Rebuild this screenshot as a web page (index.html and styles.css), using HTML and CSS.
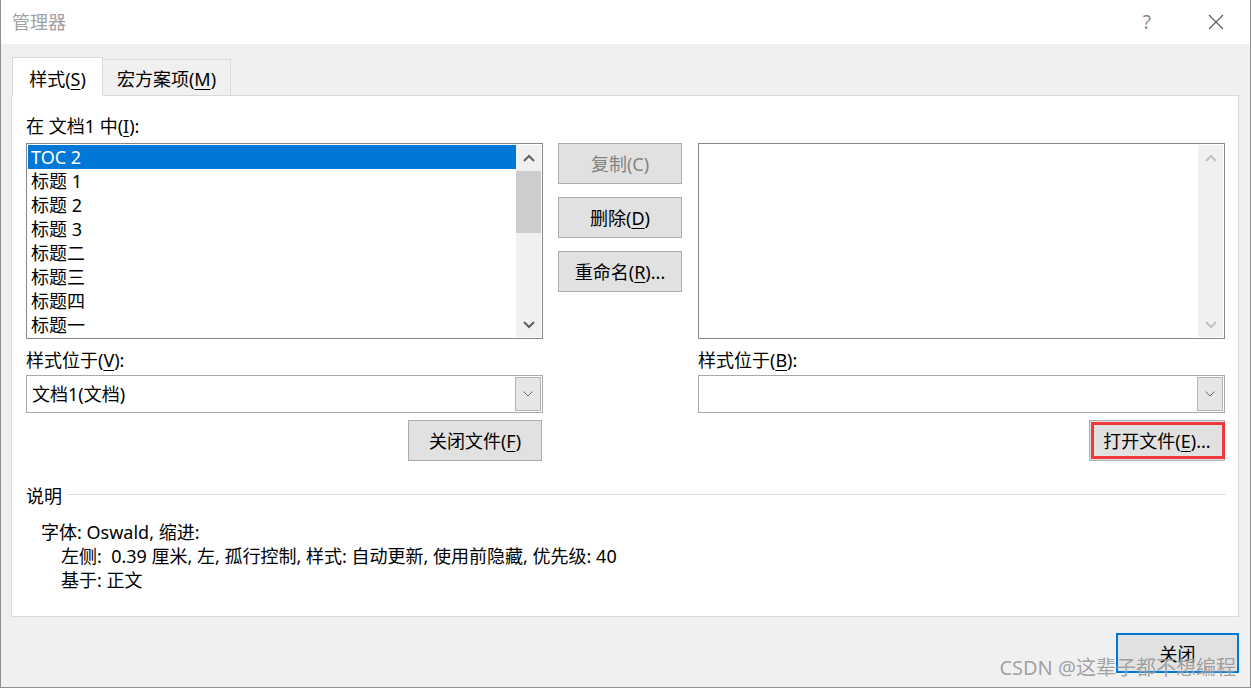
FILE: index.html
```html
<!DOCTYPE html>
<html lang="zh-CN">
<head>
<meta charset="utf-8">
<title>管理器</title>
<link rel="stylesheet" href="styles.css">
</head>
<body>
<div class="window">
  <div class="titlebar">
    <span class="title">管理器</span>
    <div class="controls">
      <span class="help">?</span>
      <svg class="x-icon" width="16" height="16" viewBox="0 0 16 16"><path d="M1 1L15 15M15 1L1 15" stroke="#5a5a5a" stroke-width="1.1" fill="none"/></svg>
    </div>
  </div>
  <div class="body">
    <div class="tabs">
      <div class="tab active">样式(<u>S</u>)</div>
      <div class="tab inactive">宏方案项(<u>M</u>)</div>
    </div>
    <div class="panel">
      <div class="columns">
        <div class="col col-left">
          <div class="label">在 文档1 中(<u>I</u>):</div>
          <div class="listbox">
            <div class="rows">
              <div class="row sel">TOC 2</div>
              <div class="row">标题 1</div>
              <div class="row">标题 2</div>
              <div class="row">标题 3</div>
              <div class="row">标题二</div>
              <div class="row">标题三</div>
              <div class="row">标题四</div>
              <div class="row">标题一</div>
            </div>
            <div class="scroll">
              <div class="sb-btn up"><svg width="12" height="8" viewBox="0 0 12 8"><path d="M1 7L6 2L11 7" fill="none" stroke="#606060" stroke-width="2"/></svg></div>
              <div class="thumb"></div>
              <div class="track"></div>
              <div class="sb-btn down"><svg width="12" height="8" viewBox="0 0 12 8"><path d="M1 1L6 6L11 1" fill="none" stroke="#606060" stroke-width="2"/></svg></div>
            </div>
          </div>
          <div class="label label-gap">样式位于(<u>V</u>):</div>
          <div class="combo">
            <span class="combo-text">文档1(文档)</span>
            <span class="combo-btn"><svg width="10" height="6" viewBox="0 0 10 6"><path d="M0.5 0.5L5 5L9.5 0.5" fill="none" stroke="#6a6a6a" stroke-width="1"/></svg></span>
          </div>
          <div class="btn-row">
            <div class="btn btn-closefile">关闭文件(<u>F</u>)</div>
          </div>
        </div>
        <div class="col col-mid">
          <div class="btn btn-mid disabled">复制(C)</div>
          <div class="btn btn-mid">删除(<u>D</u>)</div>
          <div class="btn btn-mid">重命名(<u>R</u>)...</div>
        </div>
        <div class="col col-right">
          <div class="label"></div>
          <div class="listbox">
            <div class="rows"></div>
            <div class="scroll scroll-disabled">
              <div class="sb-btn up"><svg width="12" height="8" viewBox="0 0 12 8"><path d="M1 7L6 2L11 7" fill="none" stroke="#c2c2c2" stroke-width="2"/></svg></div>
              <div class="track"></div>
              <div class="sb-btn down"><svg width="12" height="8" viewBox="0 0 12 8"><path d="M1 1L6 6L11 1" fill="none" stroke="#c2c2c2" stroke-width="2"/></svg></div>
            </div>
          </div>
          <div class="label label-gap">样式位于(<u>B</u>):</div>
          <div class="combo">
            <span class="combo-text"></span>
            <span class="combo-btn"><svg width="10" height="6" viewBox="0 0 10 6"><path d="M0.5 0.5L5 5L9.5 0.5" fill="none" stroke="#6a6a6a" stroke-width="1"/></svg></span>
          </div>
          <div class="btn-row">
            <div class="btn btn-openfile">打开文件(<u>E</u>)...<span class="highlight"></span></div>
          </div>
        </div>
      </div>
      <div class="desc">
        <div class="desc-head"><span>说明</span><span class="rule"></span></div>
        <div class="desc-body">
          <div class="desc-line">字体: Oswald, 缩进:</div>
          <div class="desc-line indent">左侧:&nbsp; 0.39 厘米, 左, 孤行控制, 样式: 自动更新, 使用前隐藏, 优先级: 40</div>
          <div class="desc-line indent">基于: 正文</div>
        </div>
      </div>
    </div>
    <div class="footer">
      <div class="btn btn-close">关闭</div>
    </div>
  </div>
  <div class="watermark">CSDN @这辈子都不想编程</div>
</div>
</body>
</html>
```
FILE: styles.css
```css
* { box-sizing: border-box; }
html, body { margin: 0; padding: 0; }
body {
  width: 1251px;
  height: 688px;
  overflow: hidden;
  background: #ffffff;
  font-family: "Noto Sans", "Noto Sans CJK SC", sans-serif;
  font-size: 18px;
  color: #000;
}
u { text-decoration-thickness: 1px; text-underline-offset: 3px; }

.window {
  position: relative;
  width: 1251px;
  height: 688px;
  border: 1px solid #8f8f8f;
  border-top: none;
  background: #f0f0f0;
  display: flex;
  flex-direction: column;
}

.titlebar {
  height: 44px;
  flex: none;
  background: #ffffff;
  display: flex;
  align-items: center;
  justify-content: space-between;
  padding-left: 11px;
}
.title { color: #a0a0a0; line-height: 24px; }
.controls { display: flex; align-items: center; }
.help { color: #8c8c8c; font-size: 19px; line-height: 24px; margin-right: 57px; }
.x-icon { display: block; margin-right: 26px; }

.body {
  flex: 1;
  padding: 13px 11px 0 10px;
  display: flex;
  flex-direction: column;
}

.tabs { display: flex; align-items: flex-end; height: 39px; padding-left: 1px; }
.tab {
  border: 1px solid #d9d9d9;
  border-bottom: none;
  display: flex;
  align-items: center;
  justify-content: center;
  line-height: 24px;
}
.tab.active {
  height: 39px;
  width: 91px;
  background: #ffffff;
  position: relative;
  z-index: 1;
  padding-top: 4px;
}
.tab.inactive {
  height: 36px;
  width: 129px;
  margin-left: -1px;
  margin-bottom: 1px;
  background: #f0f0f0;
  padding-top: 3px;
}

.panel {
  margin-top: -1px;
  height: 522px;
  background: #ffffff;
  border: 1px solid #d9d9d9;
  padding: 18px 12px 0 14px;
}

.columns { display: flex; }
.col { display: flex; flex-direction: column; }
.col-left { width: 517px; }
.col-mid { width: 124px; margin-left: 15px; padding-top: 29px; gap: 13px; }
.col-right { width: 527px; margin-left: 16px; }

.label { height: 24px; line-height: 24px; }
.label-gap { margin-top: 9px; }

.listbox {
  margin-top: 5px;
  height: 196px;
  border: 1px solid #828790;
  padding: 1px;
  display: flex;
}
.rows { flex: 1; }
.row { height: 24px; line-height: 24px; padding-left: 3px; white-space: nowrap; }
.row.sel { background: #0078d7; color: #ffffff; }

.scroll { width: 25px; background: #f0f0f0; display: flex; flex-direction: column; }
.sb-btn { height: 25px; display: flex; align-items: center; justify-content: center; }
.sb-btn svg { display: block; }
.sb-btn.up { height: 26px; }
.thumb { height: 62px; background: #cdcdcd; }
.track { flex: 1; }

.combo {
  margin-top: 3px;
  height: 38px;
  border: 1px solid #a9a9a9;
  padding: 1px;
  display: flex;
  align-items: stretch;
  background: #ffffff;
}
.combo-text { flex: 1; padding-left: 4px; line-height: 34px; }
.combo-btn {
  width: 26px;
  background: #e6e6e6;
  border: 1px solid #b4b4b4;
  display: flex;
  align-items: center;
  justify-content: center;
}
.combo-btn svg { display: block; }

.btn-row { display: flex; justify-content: flex-end; margin-top: 7px; }

.btn {
  position: relative;
  height: 41px;
  background: #e1e1e1;
  border: 1px solid #adadad;
  display: flex;
  align-items: center;
  justify-content: center;
  line-height: 24px;
  white-space: nowrap;
}
.btn.disabled { color: #838383; }
.btn-closefile { width: 134px; margin-right: 1px; }
.btn-openfile { width: 136px; }
.highlight {
  position: absolute;
  top: 1px;
  left: 1px;
  right: -1px;
  bottom: 1px;
  border: 3px solid #ee3a3d;
}

.desc { margin-top: 23px; }
.desc-head { display: flex; align-items: center; height: 24px; line-height: 24px; }
.rule { flex: 1; height: 1px; background: #dcdcdc; margin-left: 5px; margin-top: -3px; }
.desc-body { padding-top: 12px; padding-left: 15px; }
.desc-line { height: 24px; line-height: 24px; white-space: nowrap; }
.desc-line.indent { padding-left: 20px; }

.footer { display: flex; justify-content: flex-end; margin-top: 16px; }
.btn-close {
  width: 123px;
  height: 40px;
  border: 2px solid #0078d7;
  padding-top: 2px;
}

.watermark {
  position: absolute;
  right: 14px;
  top: 655px;
  font-size: 20px;
  line-height: 26px;
  color: rgba(100, 100, 100, 0.62);
  text-shadow: 0 0 1px rgba(255, 255, 255, 0.8);
  white-space: nowrap;
}
```
